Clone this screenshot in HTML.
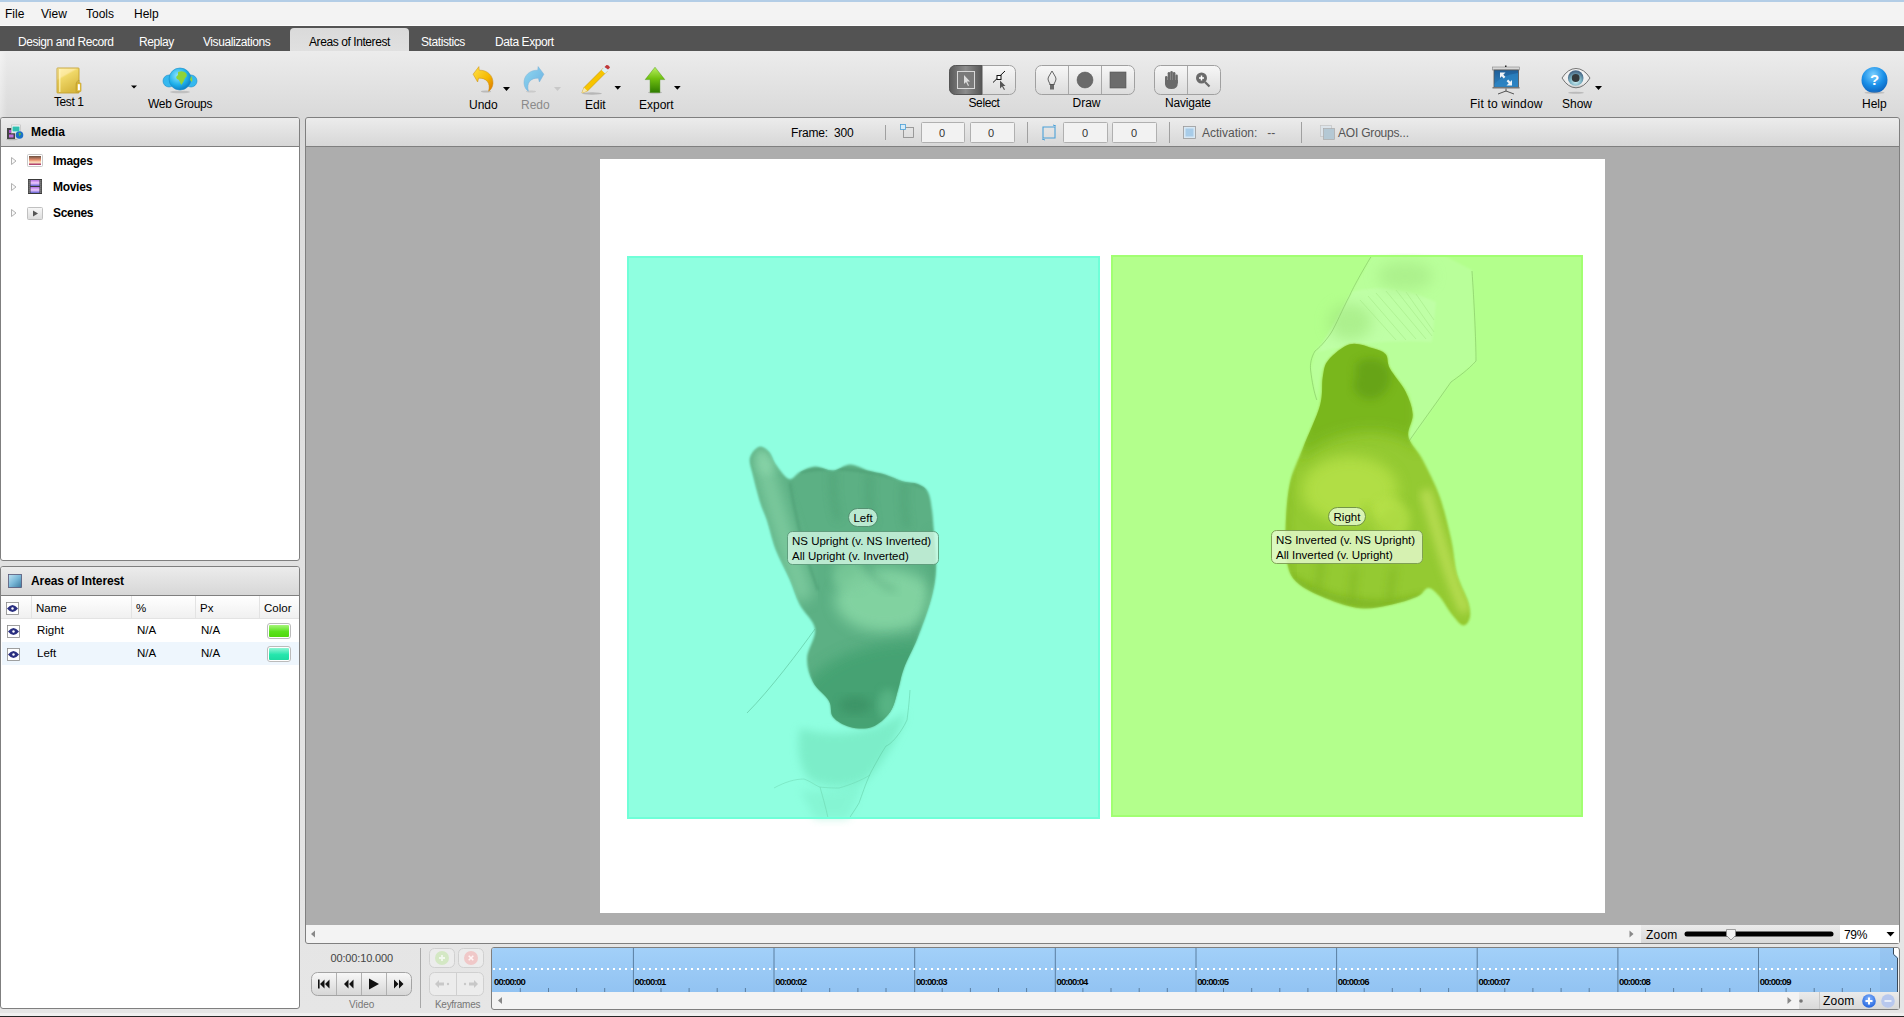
<!DOCTYPE html>
<html><head><meta charset="utf-8">
<style>
*{box-sizing:border-box}
html,body{margin:0;padding:0}
body{width:1904px;height:1017px;position:relative;overflow:hidden;background:#dedede;font-family:"Liberation Sans",sans-serif;font-size:12px;color:#000}
.a{position:absolute}
.t{position:absolute;white-space:nowrap;line-height:1}
svg{position:absolute;overflow:visible}
.hdr{background:linear-gradient(#ececec,#d7d7d7)}
.tb{color:#000}
</style></head><body>
<!-- top blue line -->
<div class="a" style="left:0;top:0;width:1904px;height:2px;background:#b3cde6"></div>
<!-- menu bar -->
<div class="a" style="left:0;top:2px;width:1904px;height:23px;background:#f3f3f3"></div>
<div class="a" style="left:0;top:25px;width:1904px;height:1px;background:#fbfbfb"></div>
<div class="t" style="left:5px;top:8px">File</div>
<div class="t" style="left:41px;top:8px">View</div>
<div class="t" style="left:86px;top:8px">Tools</div>
<div class="t" style="left:134px;top:8px">Help</div>
<!-- tab bar -->
<div class="a" style="left:0;top:26px;width:1904px;height:25px;background:#535353"></div>
<div class="a" style="left:290px;top:28px;width:119px;height:23px;background:linear-gradient(#dadada,#e0e0e0);border-radius:4px 4px 0 0"></div>
<div id="tabs" style="color:#fff;letter-spacing:-0.42px">
<div class="t" style="left:18px;top:36px">Design and Record</div>
<div class="t" style="left:139px;top:36px">Replay</div>
<div class="t" style="left:203px;top:36px">Visualizations</div>
<div class="t" style="left:309px;top:36px;color:#000">Areas of Interest</div>
<div class="t" style="left:421px;top:36px">Statistics</div>
<div class="t" style="left:495px;top:36px">Data Export</div>
</div>
<!-- toolbar background -->
<div class="a" style="left:0;top:51px;width:1904px;height:966px;background:linear-gradient(#ececec 0px,#d9d9d9 66px,#dcdcdc 120px,#e0e0e0 400px,#e6e6e6 966px)"></div>


<!-- TOOLBAR -->
<svg style="left:0;top:0" width="1904" height="120">
 <defs>
  <linearGradient id="fold" x1="0" y1="0" x2="1" y2="1"><stop offset="0" stop-color="#fbeea0"/><stop offset="0.5" stop-color="#f0d870"/><stop offset="1" stop-color="#d9b840"/></linearGradient>
  <radialGradient id="globe" cx="0.4" cy="0.35" r="0.7"><stop offset="0" stop-color="#8fe6ff"/><stop offset="0.6" stop-color="#1fb0ea"/><stop offset="1" stop-color="#0a78c0"/></radialGradient>
  <linearGradient id="undo" x1="0" y1="0" x2="1" y2="1"><stop offset="0" stop-color="#ffe24a"/><stop offset="0.6" stop-color="#f5b800"/><stop offset="1" stop-color="#d97000"/></linearGradient>
  <linearGradient id="redo" x1="0" y1="0" x2="1" y2="1"><stop offset="0" stop-color="#8fd8f0"/><stop offset="1" stop-color="#6aaee0"/></linearGradient>
  <linearGradient id="exp" x1="0" y1="0" x2="0" y2="1"><stop offset="0" stop-color="#b8f060"/><stop offset="0.45" stop-color="#70c010"/><stop offset="1" stop-color="#2f7c00"/></linearGradient>
  <linearGradient id="btn" x1="0" y1="0" x2="0" y2="1"><stop offset="0" stop-color="#f7f7f7"/><stop offset="1" stop-color="#dcdcdc"/></linearGradient>
  <linearGradient id="sel" x1="0" y1="0" x2="1" y2="0"><stop offset="0" stop-color="#5a5a5a"/><stop offset="0.5" stop-color="#8c8c8c"/><stop offset="1" stop-color="#555"/></linearGradient>
  <linearGradient id="fitscr" x1="0" y1="0" x2="0" y2="1"><stop offset="0" stop-color="#1f5e98"/><stop offset="1" stop-color="#2e82c0"/></linearGradient>
  <radialGradient id="iris" cx="0.5" cy="0.7" r="0.6"><stop offset="0" stop-color="#d8f6fa"/><stop offset="0.6" stop-color="#7ab0c0"/><stop offset="1" stop-color="#4a6a88"/></radialGradient>
  <radialGradient id="help" cx="0.45" cy="0.3" r="0.75"><stop offset="0" stop-color="#7cd0ff"/><stop offset="0.55" stop-color="#1a90e8"/><stop offset="1" stop-color="#0a5cb8"/></radialGradient>
 </defs>
 <!-- folder -->
 <linearGradient id="fold2" x1="0" y1="0" x2="0.5" y2="1"><stop offset="0" stop-color="#fff2b0"/><stop offset="0.35" stop-color="#fbe79a"/><stop offset="0.42" stop-color="#f0d868"/><stop offset="1" stop-color="#d8b840"/></linearGradient>
 <rect x="57" y="68" width="22" height="25" rx="0.6" fill="url(#fold2)" stroke="#c4a232" stroke-width="0.9"/>
 <path d="M59.8 69v23" stroke="#fff4b8" stroke-width="1.2" opacity="0.9"/>
 <path d="M58.6 69v23" stroke="#d4b040" stroke-width="0.6" opacity="0.8"/>
 <path d="M79 80 q-3 1.5 -3 4 v8.5 h3z" fill="#dcbc48" stroke="#b89a30" stroke-width="0.6"/>
 <rect x="76.5" y="83" width="4.5" height="8.5" rx="0.5" fill="#e4c040" stroke="#c09a20" stroke-width="0.6"/>
 <rect x="77.9" y="84.2" width="2" height="6" fill="#fff"/>
 <path d="M131 85.5h6l-3 3z" fill="#000"/>
 <!-- globe -->
 <ellipse cx="180" cy="92" rx="10" ry="1.3" fill="#aaa" opacity="0.6"/>
 <circle cx="169" cy="81" r="6" fill="#35b8ef" stroke="#1a8cc8" stroke-width="0.6"/>
 <circle cx="191" cy="81" r="6" fill="#35b8ef" stroke="#1a8cc8" stroke-width="0.6"/>
 <circle cx="180" cy="79" r="11" fill="url(#globe)" stroke="#1a8cc8" stroke-width="0.6"/>
 <path d="M178 72 q5 -2 8 1 q2 3 -1 5 q-1 3 -3 6 q-1 2 -2 -2 q-1 -3 -3 -3 q-2 -2 1 -4z" fill="#8fd33a"/>
 <path d="M191 76 q2 2 1 6 l-2 -2z" fill="#8fd33a"/>
 <!-- undo -->
 <ellipse cx="486" cy="91.5" rx="5" ry="1" fill="#aaa" opacity="0.7"/>
 <path d="M473.1 74.2 L478.9 66.6 L479.2 70.2 C487 69.8 493.5 75.5 493 83.5 C492.6 87.5 490.5 90.2 488.6 91.2 C489.6 87.2 489.4 83.8 487.2 81.2 C485 78.8 482 78 478.6 78.2 L477.6 82 Z" fill="url(#undo)" stroke="#c88a10" stroke-width="0.5"/>
 <path d="M503 87h7l-3.5 4z" fill="#000"/>
 <!-- redo -->
 <ellipse cx="531" cy="91.5" rx="5" ry="1" fill="#bbb" opacity="0.6"/>
 <path d="M543.9 74.2 L538.1 66.6 L537.8 70.2 C530 69.8 523.5 75.5 524 83.5 C524.4 87.5 526.5 90.2 528.4 91.2 C527.4 87.2 527.6 83.8 529.8 81.2 C532 78.8 535 78 538.4 78.2 L539.4 82 Z" fill="url(#redo)" stroke="#7ab0d8" stroke-width="0.5"/>
 <path d="M554 87h7l-3.5 4z" fill="#c8c8c8"/>
 <!-- pencil -->
 <ellipse cx="592" cy="93.5" rx="10" ry="1.2" fill="#999" opacity="0.6"/>
 <path d="M581.9 92.9 L584 87.5 L603.5 68 L607 71.5 L587.5 91 Z" fill="#f7c400" stroke="#b88a00" stroke-width="0.5"/>
 <path d="M581.9 92.9 L584 87.5 L587.5 91 Z" fill="#f5e6b0"/>
 <path d="M601.5 70 L605 66.5 L608.5 70 L605 73.5 Z" fill="#d8eef8"/>
 <path d="M604.5 67 L606.5 65 Q609 64.5 610 67.5 L608 69.5 Z" fill="#c03838"/>
 <path d="M614.5 86h6.5l-3.25 3.75z" fill="#000"/>
 <!-- export -->
 <ellipse cx="655" cy="92.5" rx="7" ry="1" fill="#999" opacity="0.6"/>
 <path d="M655 67.2 L664.8 79.6 L659.9 79.6 L659.9 92.6 L650.1 92.6 L650.1 79.6 L645.2 79.6 Z" fill="url(#exp)" stroke="#3a8a00" stroke-width="0.4"/>
 <path d="M674 86h6.7l-3.35 3.75z" fill="#000"/>

 <!-- select group -->
 <rect x="949.5" y="65.5" width="66" height="29" rx="6" fill="url(#btn)" stroke="#a0a0a0"/>
 <path d="M955.5 65.5 H982 V94.5 H955.5 A6 6 0 0 1 949.5 88.5 V71.5 A6 6 0 0 1 955.5 65.5Z" fill="url(#sel)" stroke="#555"/>
 <rect x="957.5" y="71.5" width="17" height="17" fill="#7a7a7a" stroke="#d8d8d8" stroke-width="1"/>
 <path d="M964 75 v9 l2 -2 l2 4 l1 -0.5 l-2 -4 h3z" fill="#ddd"/>
 <path d="M993 82.5 L1005 71" stroke="#111" stroke-width="1"/>
 <rect x="997" y="75.5" width="4" height="4" fill="#fff" stroke="#111" stroke-width="1"/>
 <path d="M1000 80.5 v8 l2 -2 l2 3.5 l1 -0.5 l-2 -3.5 h2.5z" fill="#555"/>
 <!-- draw group -->
 <rect x="1035.5" y="65.5" width="99" height="29" rx="6" fill="url(#btn)" stroke="#a0a0a0"/>
 <path d="M1068.5 66v28 M1101.5 66v28" stroke="#a8a8a8"/>
 <path d="M1052 71 l-3.5 6 q-1 2 0 4 l2 4 h3 l2 -4 q1 -2 0 -4z" fill="none" stroke="#555" stroke-width="0.9"/>
 <rect x="1050" y="85" width="4" height="4.5" fill="#6a6a6a"/>
 <path d="M1049.5 84.5h5" stroke="#555"/>
 <circle cx="1085" cy="80" r="8" fill="#6a6a6a" stroke="#555" stroke-width="0.5"/>
 <rect x="1110" y="72" width="16" height="16" fill="#6c6c6c" stroke="#555" stroke-width="0.6"/>
 <!-- navigate group -->
 <rect x="1154.5" y="65.5" width="66" height="29" rx="6" fill="url(#btn)" stroke="#a0a0a0"/>
 <path d="M1187.5 66v28" stroke="#a8a8a8"/>
 <g fill="#6a6a6a"><rect x="1165" y="76" width="2.6" height="9" rx="1.3"/><rect x="1167.7" y="72" width="2.5" height="11" rx="1.25"/><rect x="1170.3" y="71" width="2.5" height="12" rx="1.25"/><rect x="1172.9" y="72" width="2.5" height="11" rx="1.25"/><rect x="1175.4" y="74.5" width="2.4" height="9" rx="1.2"/><path d="M1165 80 h12.8 v3 q0 6 -6.4 6 q-6.4 0 -6.4 -6z"/></g>
 <circle cx="1201.5" cy="78" r="5.5" fill="#6a6a6a"/>
 <path d="M1199 78h5 M1201.5 75.5v5" stroke="#fff" stroke-width="1.5"/>
 <path d="M1205 82 l4.5 4.5" stroke="#6a6a6a" stroke-width="2.2"/>

 <!-- fit to window -->
 <rect x="1492.5" y="67" width="27" height="3" fill="#d8d8d8" stroke="#888" stroke-width="0.6"/>
 <rect x="1505" y="65.5" width="1.5" height="1.5" fill="#222"/>
 <rect x="1494" y="70" width="24.5" height="17" fill="url(#fitscr)" stroke="#555" stroke-width="0.8"/>
 <path d="M1494.5 84 q8 -9 23.5 -11 v14 h-23.5z" fill="#2c86c6" opacity="0.7"/>
 <rect x="1492.5" y="87" width="27" height="1.5" fill="#777"/>
 <path d="M1506 88.5 v3 M1506 91 l-8 3 M1506 91 l8 3" stroke="#555" stroke-width="1"/>
 <path d="M1500 72.5 h5.5 l-5.5 5.5z" fill="#f0f4f8"/><path d="M1502 75 l2.6 2.6" stroke="#f0f4f8" stroke-width="2.2"/>
 <path d="M1512 85.5 h-5.5 l5.5 -5.5z" fill="#f0f4f8"/><path d="M1510 83 l-2.6 -2.6" stroke="#f0f4f8" stroke-width="2.2"/>
 <!-- eye -->
 <ellipse cx="1576" cy="92.8" rx="7.8" ry="1" fill="#aaa" opacity="0.7"/>
 <radialGradient id="eyew" cx="0.5" cy="0.35" r="0.7"><stop offset="0" stop-color="#ffffff"/><stop offset="0.7" stop-color="#ececec"/><stop offset="1" stop-color="#b8b8b8"/></radialGradient><path d="M1562 78 Q1568 68.5 1576 68.5 Q1584 68.5 1590 78 Q1584 87.8 1576 87.8 Q1568 87.8 1562 78Z" fill="url(#eyew)" stroke="#666" stroke-width="0.9"/>
 <circle cx="1575.7" cy="78" r="7.8" fill="url(#iris)"/>
 <circle cx="1575.7" cy="78" r="3.9" fill="#34393c"/>
 <path d="M1595 86h7l-3.5 4z" fill="#000"/>
 <!-- help -->
 <circle cx="1874.5" cy="80" r="13" fill="url(#help)"/>
 <ellipse cx="1874.5" cy="92.8" rx="10" ry="1" fill="#999" opacity="0.5"/>
 <text x="1874.5" y="85" text-anchor="middle" font-family="Liberation Sans" font-weight="bold" font-size="15" fill="#fff">?</text>
</svg>
<div class="t" style="left:54px;top:96px;letter-spacing:-0.4px">Test 1</div>
<div class="t" style="left:148px;top:98px;letter-spacing:-0.3px">Web Groups</div>
<div class="t" style="left:469px;top:99px">Undo</div>
<div class="t" style="left:521px;top:99px;color:#8a8a8a">Redo</div>
<div class="t" style="left:585px;top:99px">Edit</div>
<div class="t" style="left:639px;top:99px">Export</div>
<div class="t" style="left:968.5px;top:97px;letter-spacing:-0.4px">Select</div>
<div class="t" style="left:1072.5px;top:97px">Draw</div>
<div class="t" style="left:1165px;top:97px;letter-spacing:-0.2px">Navigate</div>
<div class="t" style="left:1470px;top:98px;letter-spacing:0.2px">Fit to window</div>
<div class="t" style="left:1562px;top:98px">Show</div>
<div class="t" style="left:1862px;top:98px">Help</div>

<div class="a" style="left:0;top:52px;width:7px;height:65px;background:linear-gradient(to right,rgba(255,255,255,0.35),rgba(255,255,255,0))"></div>
<!-- LEFT: media panel -->
<div class="a" style="left:0;top:117px;width:300px;height:444px;border:1px solid #7f7f7f;border-radius:3px;background:#fff;overflow:hidden">
  <div class="a hdr" style="left:0;top:0;width:298px;height:29px;border-bottom:1px solid #7f7f7f"></div>
</div>
<div class="t" style="left:31px;top:126px;font-weight:bold">Media</div>
<div class="t" style="left:53px;top:155px;font-weight:bold;letter-spacing:-0.3px">Images</div>
<div class="t" style="left:53px;top:181px;font-weight:bold;letter-spacing:-0.3px">Movies</div>
<div class="t" style="left:53px;top:207px;font-weight:bold;letter-spacing:-0.3px">Scenes</div>

<!-- LEFT: AOI panel -->
<div class="a" style="left:0;top:566px;width:300px;height:443px;border:1px solid #7f7f7f;border-radius:3px;background:#fff;overflow:hidden">
  <div class="a hdr" style="left:0;top:0;width:298px;height:29px;border-bottom:1px solid #7f7f7f"></div>
  <div class="a" style="left:0;top:29px;width:298px;height:23px;background:linear-gradient(#ffffff,#f0f0f0);border-bottom:1px solid #e3e3e3"></div>
  <div class="a" style="left:30px;top:29px;width:1px;height:22px;background:#e3e3e3"></div>
  <div class="a" style="left:130px;top:29px;width:1px;height:22px;background:#e3e3e3"></div>
  <div class="a" style="left:194px;top:29px;width:1px;height:22px;background:#e3e3e3"></div>
  <div class="a" style="left:258px;top:29px;width:1px;height:22px;background:#e3e3e3"></div>
  <div class="a" style="left:1px;top:75px;width:297px;height:23px;background:#eef6fd"></div>
</div>
<div class="t" style="left:31px;top:575px;font-weight:bold;letter-spacing:-0.1px">Areas of Interest</div>
<div class="t" style="left:36px;top:603px;font-size:11.5px">Name</div>
<div class="t" style="left:136px;top:603px;font-size:11.5px">%</div>
<div class="t" style="left:200px;top:603px;font-size:11.5px">Px</div>
<div class="t" style="left:264px;top:603px;font-size:11.5px">Color</div>
<div class="t" style="left:37px;top:625px;font-size:11.5px">Right</div>
<div class="t" style="left:137px;top:625px;font-size:11.5px">N/A</div>
<div class="t" style="left:201px;top:625px;font-size:11.5px">N/A</div>
<div class="t" style="left:37px;top:648px;font-size:11.5px">Left</div>
<div class="t" style="left:137px;top:648px;font-size:11.5px">N/A</div>
<div class="t" style="left:201px;top:648px;font-size:11.5px">N/A</div>
<div class="a" style="left:267px;top:623px;width:24px;height:16px;border:1px solid #bbb;border-radius:3px;background:#fff;padding:1px">
  <div style="width:100%;height:100%;background:linear-gradient(#a6f57a,#5ae21d 55%,#4fd80d);border-radius:1px"></div></div>
<div class="a" style="left:267px;top:646px;width:24px;height:16px;border:1px solid #bbb;border-radius:3px;background:#fff;padding:1px">
  <div style="width:100%;height:100%;background:linear-gradient(#8ff5d6,#26e6ad 55%,#1ddba2);border-radius:1px"></div></div>


<svg style="left:0;top:110px" width="300" height="120">
 <defs>
  <linearGradient id="pic" x1="0" y1="0" x2="0" y2="1"><stop offset="0" stop-color="#6a5040"/><stop offset="0.45" stop-color="#e89070"/><stop offset="0.7" stop-color="#ffe8c0"/><stop offset="1" stop-color="#a02060"/></linearGradient>
  <linearGradient id="mov" x1="0" y1="0" x2="0" y2="1"><stop offset="0" stop-color="#b070e0"/><stop offset="0.5" stop-color="#f0c8ff"/><stop offset="1" stop-color="#6060d0"/></linearGradient>
  <linearGradient id="scn" x1="0" y1="0" x2="0" y2="1"><stop offset="0" stop-color="#f8f8f8"/><stop offset="1" stop-color="#dcdcdc"/></linearGradient>
  <linearGradient id="aoiic" x1="0" y1="0" x2="1" y2="1"><stop offset="0" stop-color="#b8dcef"/><stop offset="1" stop-color="#3a80a8"/></linearGradient>
 </defs>
 <!-- media header icon -->
 <rect x="7" y="18" width="8" height="11" fill="#444"/>
 <rect x="9" y="20" width="4.5" height="3" fill="#b050d0"/><rect x="9" y="24.5" width="4.5" height="3" fill="#c070e0"/>
 <rect x="11.5" y="15" width="9" height="8" fill="#fff" stroke="#bbb" stroke-width="0.7"/>
 <rect x="12.5" y="16.5" width="7" height="5" fill="#30c0b0"/>
 <circle cx="19.5" cy="25" r="3.8" fill="#1a70c8"/><path d="M18.5 23 q2 -1 2.5 1 l-1.5 2.5z" fill="#5ac040"/>
 <ellipse cx="12" cy="29.5" rx="6" ry="0.8" fill="#999" opacity="0.6"/>
 <!-- tree arrows -->
 <path d="M11.5 47.5 L16 51 L11.5 54.5 Z" fill="#fafafa" stroke="#a8a8a8" stroke-width="0.9"/>
 <path d="M11.5 73.5 L16 77 L11.5 80.5 Z" fill="#fafafa" stroke="#a8a8a8" stroke-width="0.9"/>
 <path d="M11.5 99.5 L16 103 L11.5 106.5 Z" fill="#fafafa" stroke="#a8a8a8" stroke-width="0.9"/>
 <!-- images -->
 <rect x="27.5" y="44.5" width="15" height="12" rx="1" fill="#fff" stroke="#c8c8c8"/>
 <rect x="29" y="46" width="12" height="9" fill="url(#pic)"/>
 <!-- movies -->
 <rect x="28" y="69" width="14" height="15" fill="#3a3a3a"/>
 <rect x="30.5" y="70" width="9" height="6" fill="url(#mov)"/><rect x="30.5" y="77" width="9" height="6" fill="url(#mov)"/>
 <path d="M29.2 70.5v12.5 M40.8 70.5v12.5" stroke="#fff" stroke-width="0.9" stroke-dasharray="0.9 1.1"/>
 <!-- scenes -->
 <rect x="27.5" y="97.5" width="15" height="12" rx="1" fill="url(#scn)" stroke="#c0c0c0"/>
 <path d="M33 100.5 L38 103.5 L33 106.5Z" fill="#555"/>
</svg>
<svg style="left:0;top:560px" width="300" height="110">
 <defs>
  <linearGradient id="aoiic2" x1="0" y1="0" x2="1" y2="1"><stop offset="0" stop-color="#c0e2f2"/><stop offset="0.5" stop-color="#7ab8d8"/><stop offset="1" stop-color="#3a7aa0"/></linearGradient>
 </defs>
 <rect x="8.5" y="14.5" width="13" height="13" fill="url(#aoiic2)" stroke="#557" stroke-width="0.8"/>
 <!-- eyes -->
 <g id="eye1">
 <rect x="6.5" y="42.5" width="12" height="12" fill="#fff" stroke="#888" stroke-width="0.8"/>
 <path d="M7 48.5 q5.5 -7 11 0 q-5.5 7 -11 0z" fill="#2a2f80"/><circle cx="12.5" cy="48.5" r="1.2" fill="#fff"/>
 </g>
 <rect x="7.5" y="65.5" width="12" height="12" fill="#fff" stroke="#888" stroke-width="0.8"/>
 <path d="M8 71.5 q5.5 -7 11 0 q-5.5 7 -11 0z" fill="#2a2f80"/><circle cx="13.5" cy="71.5" r="1.2" fill="#fff"/>
 <rect x="7.5" y="88.5" width="12" height="12" fill="#fff" stroke="#888" stroke-width="0.8"/>
 <path d="M8 94.5 q5.5 -7 11 0 q-5.5 7 -11 0z" fill="#2a2f80"/><circle cx="13.5" cy="94.5" r="1.2" fill="#fff"/>
</svg>

<!-- MAIN panel -->
<div class="a" style="left:305px;top:117px;width:1595px;height:827px;border:1px solid #7f7f7f;border-radius:3px;background:#adadad;overflow:hidden">
  <div class="a hdr" style="left:0;top:0;width:1593px;height:29px;border-bottom:1px solid #7f7f7f"></div>
  <div class="a" style="left:0;top:807px;width:1593px;height:18px;background:#f3f3f3"></div>
</div>
<div class="t" style="left:791px;top:127px;letter-spacing:-0.2px">Frame:&nbsp; 300</div>


<svg style="left:880px;top:117px" width="560" height="30">
 <path d="M5.5 8v15 M147.5 5v21 M289.5 5v21 M421.5 5v21" stroke="#a0a0a0"/>
 <rect x="23.5" y="10.5" width="10" height="10" fill="none" stroke="#888" stroke-width="0.8"/>
 <rect x="20.5" y="7.5" width="5" height="5" fill="#d8ecf8" stroke="#4aa0d8" stroke-width="0.8"/>
 <rect x="41.5" y="5.5" width="43" height="20" rx="1" fill="#f2f2f2" stroke="#b0b0b0"/>
 <rect x="90.5" y="5.5" width="44" height="20" rx="1" fill="#f2f2f2" stroke="#b0b0b0"/>
 <path d="M163 10h12v11h-12z" fill="none" stroke="#4aa0d8" stroke-width="1.1"/>
 <path d="M176 9l-3 -1 M162 22 l3 1" stroke="#4aa0d8" stroke-width="1"/>
 <rect x="183.5" y="5.5" width="44" height="20" rx="1" fill="#f2f2f2" stroke="#b0b0b0"/>
 <rect x="232.5" y="5.5" width="44" height="20" rx="1" fill="#f2f2f2" stroke="#b0b0b0"/>
 <rect x="303.5" y="9.5" width="12" height="12" fill="#d8e8f4" stroke="#999" stroke-width="0.8"/>
 <rect x="305.5" y="11.5" width="8" height="8" fill="#a8cce8"/>
 <rect x="440.5" y="8.5" width="11" height="11" fill="#dde4ea" stroke="#c4c4c4" stroke-width="0.7"/>
 <rect x="443.5" y="11.5" width="11" height="11" fill="#b4c8d4" stroke="#aaa" stroke-width="0.7"/>
</svg>
<div class="t" style="left:939px;top:128px;font-size:11px;color:#333">0</div>
<div class="t" style="left:988px;top:128px;font-size:11px;color:#333">0</div>
<div class="t" style="left:1082px;top:128px;font-size:11px;color:#333">0</div>
<div class="t" style="left:1131px;top:128px;font-size:11px;color:#333">0</div>
<div class="t" style="left:1202px;top:127px;color:#555">Activation:&nbsp;&nbsp; --</div>
<div class="t" style="left:1338px;top:127px;color:#555;letter-spacing:-0.2px">AOI Groups...</div>

<!-- stimulus -->
<div class="a" style="left:600px;top:159px;width:1005px;height:754px;background:#fff"></div>


<svg style="left:0;top:0" width="1904" height="1017">
 <defs>
  <filter id="bl1" x="-10%" y="-10%" width="120%" height="120%"><feGaussianBlur stdDeviation="1.2"/></filter>
  <filter id="bl3" x="-20%" y="-20%" width="140%" height="140%"><feGaussianBlur stdDeviation="4"/></filter>
  <filter id="bl6" x="-30%" y="-30%" width="160%" height="160%"><feGaussianBlur stdDeviation="7"/></filter>
  <clipPath id="clipL"><path id="handL" d="M759.0,447.0 C762.2,446.0 766.2,449.0 769.0,452.0 C771.8,455.0 772.7,460.5 776.0,465.0 C779.3,469.5 785.0,477.8 789.0,479.0 C793.0,480.2 795.7,474.1 800.0,472.0 C804.3,469.9 809.5,466.8 815.0,466.5 C820.5,466.2 827.2,470.8 833.0,470.5 C838.8,470.2 844.2,464.5 850.0,464.5 C855.8,464.5 862.2,468.8 868.0,470.5 C873.8,472.2 879.2,472.7 885.0,474.5 C890.8,476.3 897.5,479.9 903.0,481.5 C908.5,483.1 913.8,482.2 918.0,484.0 C922.2,485.8 925.7,487.7 928.0,492.0 C930.3,496.3 931.0,503.0 932.0,510.0 C933.0,517.0 933.3,524.1 934.0,534.0 C934.7,543.9 936.5,558.7 936.0,569.5 C935.5,580.3 934.1,587.6 931.0,599.0 C927.9,610.4 922.0,626.5 917.5,638.0 C913.0,649.5 907.2,659.3 904.0,668.0 C900.8,676.7 900.3,682.7 898.0,690.0 C895.7,697.3 894.3,705.8 890.0,712.0 C885.7,718.2 878.7,724.5 872.0,727.0 C865.3,729.5 856.5,728.7 850.0,727.0 C843.5,725.3 836.5,721.3 833.0,717.0 C829.5,712.7 832.3,706.8 829.0,701.0 C825.7,695.2 816.7,689.2 813.0,682.0 C809.3,674.8 806.7,666.8 807.0,658.0 C807.3,649.2 816.2,637.8 815.0,629.0 C813.8,620.2 804.2,613.3 800.0,605.0 C795.8,596.7 793.7,588.2 789.7,579.0 C785.7,569.8 779.8,559.8 776.0,550.0 C772.2,540.2 769.6,527.8 767.0,520.0 C764.4,512.2 762.8,510.5 760.5,503.0 C758.2,495.5 754.8,482.5 753.0,475.0 C751.2,467.5 749.0,462.7 750.0,458.0 C751.0,453.3 755.8,448.0 759.0,447.0 Z"/></clipPath>
  <clipPath id="clipR"><path id="handR" d="M1349.9,344.3 C1357.2,342.3 1366.0,346.3 1372.0,348.0 C1378.0,349.7 1382.6,350.9 1385.6,354.3 C1388.6,357.7 1386.5,362.3 1389.8,368.5 C1393.1,374.7 1401.7,383.8 1405.5,391.4 C1409.3,399.0 1412.2,406.6 1412.7,414.2 C1413.2,421.8 1406.7,429.4 1408.4,437.0 C1410.1,444.6 1417.5,449.8 1422.7,459.8 C1427.9,469.8 1435.0,483.6 1439.8,496.9 C1444.5,510.2 1448.3,526.9 1451.2,539.7 C1454.1,552.6 1454.1,563.5 1456.9,574.0 C1459.8,584.5 1466.2,595.1 1468.3,602.5 C1470.4,609.9 1470.7,614.4 1469.7,618.2 C1468.8,622.0 1465.9,626.3 1462.6,625.3 C1459.3,624.3 1453.8,616.8 1450.0,612.0 C1446.2,607.2 1443.4,600.8 1439.8,596.8 C1436.2,592.8 1432.2,588.0 1428.4,588.0 C1424.6,588.0 1423.7,593.9 1417.0,596.8 C1410.3,599.7 1397.9,603.4 1388.4,605.3 C1378.9,607.2 1370.4,609.4 1359.9,608.2 C1349.4,607.0 1336.1,602.5 1325.6,598.2 C1315.1,593.9 1303.5,588.5 1297.1,582.5 C1290.7,576.5 1289.0,572.0 1287.1,562.5 C1285.2,553.0 1285.2,538.7 1285.7,525.4 C1286.2,512.1 1287.2,495.5 1290.0,482.7 C1292.8,469.9 1297.8,461.2 1302.8,448.4 C1307.8,435.5 1316.7,417.5 1320.0,405.6 C1323.3,393.7 1321.4,384.6 1322.8,377.0 C1324.2,369.4 1324.0,365.4 1328.5,360.0 C1333.0,354.6 1342.7,346.3 1349.9,344.3 Z"/></clipPath>
 </defs>
 <!-- LEFT AOI -->
 <rect x="627" y="256" width="473" height="563" fill="#8fffe0"/>
 <!-- left sleeve -->
 <path d="M800,728 C830,738 870,735 906,712 C900,735 885,760 868,778 C850,790 825,788 810,780 C800,770 796,750 800,728Z" fill="#70e2ba" filter="url(#bl3)" opacity="0.6"/>
 <path d="M800,790 C820,792 845,790 865,780 C858,800 852,810 848,819 L815,819Z" fill="#78e8c2" filter="url(#bl3)" opacity="0.4"/>
 <path d="M815,629 C800,650 770,690 747,713" stroke="#5cc09a" stroke-width="0.9" fill="none" opacity="0.7"/>
 <path d="M910,690 C909,705 908,712 907,720 C900,735 890,745 886,746 C880,755 875,765 871,772 C865,785 862,795 859,803 C855,810 851,815 849,819" stroke="#5cc09a" stroke-width="1" fill="none" opacity="0.45"/>
 <path d="M774,788 C785,782 795,779 804,779 C812,782 816,786 820,787 C828,788 835,788 839,788 C850,785 862,780 870,775" stroke="#6ad0aa" stroke-width="1" fill="none" opacity="0.45"/>
 <path d="M820,787 C823,798 826,808 828,818" stroke="#6ad0aa" stroke-width="1" fill="none" opacity="0.5"/>
 <g filter="url(#bl1)">
  <use href="#handL" fill="#5cb084"/>
 </g>
 <g clip-path="url(#clipL)">
  <path d="M762,458 C770,490 785,540 805,600" stroke="#7fcca0" stroke-width="20" fill="none" filter="url(#bl6)" opacity="0.9"/>
  <ellipse cx="764" cy="462" rx="8" ry="14" fill="#8ad6aa" filter="url(#bl3)" opacity="0.8" transform="rotate(-20 764 462)"/>
  <path d="M790,483 C796,520 805,555 818,590" stroke="#4c9c72" stroke-width="3" fill="none" filter="url(#bl1)" opacity="0.5"/>
  <ellipse cx="885" cy="600" rx="50" ry="32" fill="#86d6a4" filter="url(#bl6)" opacity="0.9"/>
  <ellipse cx="850" cy="575" rx="18" ry="16" fill="#7ecd9c" filter="url(#bl3)" opacity="0.7"/>
  <path d="M833,470 C832,490 834,505 838,520 M870,474 C868,492 869,508 873,525 M905,481 C903,497 904,512 907,528" stroke="#4a9c70" stroke-width="4" fill="none" filter="url(#bl3)" opacity="0.8"/>
  <path d="M800,472 C830,466 880,468 930,490" stroke="#4a9a70" stroke-width="3" fill="none" filter="url(#bl1)" opacity="0.5"/>
  <path d="M862,555 C868,575 880,585 895,590" stroke="#509e76" stroke-width="4" fill="none" filter="url(#bl3)" opacity="0.6"/>
  <path d="M800,690 C830,650 880,640 930,640 L930,740 L800,740Z" fill="#44a272" filter="url(#bl6)" opacity="0.95"/>
  <ellipse cx="855" cy="705" rx="16" ry="9" fill="#3a9064" filter="url(#bl3)" opacity="0.7"/>
  <ellipse cx="888" cy="705" rx="10" ry="16" fill="#5cb888" filter="url(#bl3)" opacity="0.8"/>
  <path d="M932,530 C936,570 930,610 915,645" stroke="#52a87a" stroke-width="7" fill="none" filter="url(#bl3)" opacity="0.6"/>
 </g>
 <rect x="628" y="257" width="471" height="561" fill="none" stroke="#70ffd8" stroke-width="2"/>

 <!-- RIGHT AOI -->
 <rect x="1111" y="255" width="472" height="562" fill="#b3ff8c"/>
 <path d="M1372,256 L1445,256 L1472,270 L1476,362 L1451,382 L1406,446 L1414,419 L1410,394 L1389,366 L1387,353 L1350,345 L1321,370 L1317,400 L1311,370 L1315,351 L1331,333 L1350,295 Z" fill="#bfffa6" filter="url(#bl1)" opacity="0.55"/>
 <path d="M1352,292 C1380,284 1410,290 1436,302 L1432,342 C1400,340 1360,342 1318,352 C1325,340 1335,320 1352,292Z" fill="#c4ffae" filter="url(#bl1)" opacity="0.6"/>
 <ellipse cx="1350" cy="322" rx="22" ry="18" fill="#a0e67e" filter="url(#bl6)" opacity="0.6"/>
 <ellipse cx="1405" cy="276" rx="28" ry="14" fill="#a4e884" filter="url(#bl6)" opacity="0.6"/>
 <path d="M1360,300 l36,40 M1368,296 l38,44 M1376,293 l40,46 M1386,291 l40,48 M1396,290 l36,46 M1406,292 l28,40 M1416,294 l18,26" stroke="#a4e886" stroke-width="0.8" opacity="0.7"/>
 <path d="M1372,255 C1360,275 1352,290 1350,295 C1342,310 1336,325 1331,333 C1325,342 1319,348 1315,351 C1311,358 1310,364 1310.6,370 C1312,382 1314,392 1316.8,400" stroke="#84c464" stroke-width="0.9" fill="none" opacity="0.7"/>
 <path d="M1472,271 C1474,300 1476,340 1476,361 C1468,370 1458,377 1451,382 C1435,405 1420,425 1405.6,446" stroke="#84c464" stroke-width="0.9" fill="none" opacity="0.7"/>
 <g filter="url(#bl1)"><use href="#handR" fill="#94ca30"/></g>
 <g clip-path="url(#clipR)">
  <path d="M1300,460 C1330,430 1390,420 1420,450 L1420,330 L1300,330Z" fill="#78b61a" filter="url(#bl6)" opacity="0.95"/>
  <path d="M1356,364 C1368,354 1386,358 1390,372 C1392,386 1384,400 1368,399 C1356,397 1350,386 1356,378Z" fill="#609c12" filter="url(#bl3)" opacity="0.7"/>
  <ellipse cx="1350" cy="490" rx="48" ry="34" fill="#b4e046" filter="url(#bl6)" opacity="0.9"/>
  <ellipse cx="1390" cy="520" rx="20" ry="22" fill="#b8e24c" filter="url(#bl3)" opacity="0.7"/>
  <path d="M1365,505 C1370,525 1380,535 1395,540" stroke="#88bc28" stroke-width="4" fill="none" filter="url(#bl3)" opacity="0.6"/>
  <path d="M1425,490 C1440,540 1450,580 1466,612" stroke="#bee058" stroke-width="12" fill="none" filter="url(#bl3)" opacity="0.8"/>
  <path d="M1290,578 C1330,604 1380,612 1425,598" stroke="#68a212" stroke-width="5" fill="none" filter="url(#bl3)" opacity="0.8"/>
  <path d="M1318,590 C1320,572 1322,562 1322,552 M1352,604 C1352,588 1354,578 1355,568 M1390,602 C1390,588 1392,578 1394,568" stroke="#7ab020" stroke-width="4" fill="none" filter="url(#bl3)" opacity="0.8"/>
  <path d="M1287,470 C1284,520 1286,560 1295,580" stroke="#80b822" stroke-width="6" fill="none" filter="url(#bl3)" opacity="0.7"/>
 </g>
 <rect x="1112" y="256" width="470" height="560" fill="none" stroke="#a2ff72" stroke-width="2"/>

 <!-- labels -->
 <g font-family="Liberation Sans" font-size="11.5">
  <rect x="848.5" y="508.5" width="29" height="18" rx="9" fill="#d2f7e3" fill-opacity="0.8" stroke="#4f8a6c" stroke-width="0.9"/>
  <text x="863" y="521.7" text-anchor="middle" fill="#000">Left</text>
  <rect x="787.5" y="531.5" width="151" height="33" rx="5" fill="#d2f7e3" fill-opacity="0.8" stroke="#5a9878" stroke-width="0.9"/>
  <text x="792" y="544.6" fill="#000">NS Upright (v. NS Inverted)</text>
  <text x="792" y="559.6" fill="#000">All Upright (v. Inverted)</text>

  <rect x="1328.5" y="507.5" width="37" height="18" rx="9" fill="#e2f8c8" fill-opacity="0.85" stroke="#6a8a40" stroke-width="0.9"/>
  <text x="1347" y="520.7" text-anchor="middle" fill="#000">Right</text>
  <rect x="1271.5" y="530.5" width="151" height="33" rx="5" fill="#e2f8c8" fill-opacity="0.85" stroke="#7a9a50" stroke-width="0.9"/>
  <text x="1276" y="543.7" fill="#000">NS Inverted (v. NS Upright)</text>
  <text x="1276" y="558.7" fill="#000">All Inverted (v. Upright)</text>
 </g>
</svg>

<!-- TIMELINE -->
<div class="a" style="left:491px;top:947px;width:1409px;height:63px;border:1px solid #7f7f7f;border-radius:3px;background:#f3f3f3;overflow:hidden">
  <div class="a" style="left:0;top:0;width:1406px;height:44px;background:linear-gradient(#a2d0f9,#92c3f2)"></div>
</div>


<!-- scrollbar + zoom -->
<svg style="left:0;top:900px" width="1904" height="117">
 <defs>
  <linearGradient id="zbox" x1="0" y1="0" x2="0" y2="1"><stop offset="0" stop-color="#ebebeb"/><stop offset="1" stop-color="#d9d9d9"/></linearGradient>
  <linearGradient id="tbtn" x1="0" y1="0" x2="0" y2="1"><stop offset="0" stop-color="#f8f8f8"/><stop offset="1" stop-color="#d6d6d6"/></linearGradient>
  <radialGradient id="zplus" cx="0.5" cy="0.35" r="0.6"><stop offset="0" stop-color="#8ab8ff"/><stop offset="1" stop-color="#2a6ae0"/></radialGradient>
 </defs>
 <path d="M315 30.5 l-4 3.5 l4 3.5z" fill="#888"/>
 <path d="M1629.5 30.5 l4 3.5 l-4 3.5z" fill="#888"/>
 <rect x="1641" y="25" width="199" height="18" fill="url(#zbox)"/>
 <rect x="1840" y="25" width="59" height="18" fill="#fff"/>
 <path d="M1687 34h144" stroke="#000" stroke-width="5" stroke-linecap="round"/>
 <path d="M1726.5 29.5 h9 v6 l-4.5 4.5 l-4.5 -4.5z" fill="#f2f2f2" stroke="#888" stroke-width="0.8"/>
 <path d="M1886.5 32 h8 l-4 4.5z" fill="#000"/>
 <!-- transport -->
 <rect x="311.5" y="72.5" width="100" height="23" rx="6" fill="url(#tbtn)" stroke="#a4a4a4"/>
 <path d="M336.5 73v22 M361.5 73v22 M386.5 73v22" stroke="#b0b0b0"/>
 <path d="M318 79.5h1.6v9h-1.6z M320 84 l4.5 -4.5 v9z M325 84 l4.5 -4.5 v9z" fill="#111"/>
 <path d="M344 84 l4.5 -4.5 v9z M349 84 l4.5 -4.5 v9z" fill="#111"/>
 <path d="M369 78.5 l10 5.5 l-10 5.5z" fill="#111"/>
 <path d="M394 79.5 l4.5 4.5 l-4.5 4.5z M399 79.5 l4.5 4.5 l-4.5 4.5z" fill="#111"/>
 <path d="M420.5 48v60" stroke="#a8a8a8"/>
 <rect x="429.5" y="48.5" width="25" height="19" rx="5" fill="#ececec" stroke="#d0d0d0"/>
 <rect x="458.5" y="48.5" width="25" height="19" rx="5" fill="#ececec" stroke="#d0d0d0"/>
 <circle cx="442" cy="58" r="7" fill="#d4e8c4"/><path d="M439 58h6 M442 55v6" stroke="#f2f8ee" stroke-width="1.8"/>
 <circle cx="471" cy="58" r="7" fill="#f0c8c8"/><path d="M468.7 55.7l4.6 4.6 M473.3 55.7l-4.6 4.6" stroke="#fff4f4" stroke-width="1.6"/>
 <rect x="429.5" y="72.5" width="54" height="23" rx="5" fill="#ececec" stroke="#d0d0d0"/>
 <path d="M456.5 73v22" stroke="#d0d0d0"/>
 <path d="M435 84 l4 -4 v2.5 h5 v3 h-5 v2.5z" fill="#c8c8c8"/><circle cx="448" cy="84" r="1.2" fill="#c8c8c8"/>
 <path d="M478 84 l-4 -4 v2.5 h-5 v3 h5 v2.5z" fill="#c8c8c8"/><circle cx="465" cy="84" r="1.2" fill="#c8c8c8"/>
 <!-- timeline extras -->
 
 <rect x="1880" y="48" width="17" height="44" fill="#6a9ad0" opacity="0.18"/><path d="M1893.5 48 v6.3 l4 3.7 v34" stroke="#3a4a5a" stroke-width="1" fill="none"/><path d="M1894 48 h4 v9.5 l-4 -3.5z" fill="#fff"/>
 <path d="M1838 48 h58 v44 h-58z" fill="url(#tlshade)" opacity="0"/>
 <path d="M502 97 l-4 3.5 l4 3.5z" fill="#888"/>
 <path d="M1787.5 97 l4 3.5 l-4 3.5z" fill="#888"/>
 <rect x="1799" y="92" width="100" height="17" fill="url(#zbox)"/>
 <path d="M1819.5 92v17" stroke="#c8c8c8"/>
 <circle cx="1801" cy="101" r="1.8" fill="#777"/>
 <circle cx="1869" cy="101" r="6.8" fill="url(#zplus)"/>
 <path d="M1865.5 101h7 M1869 97.5v7" stroke="#fff" stroke-width="2"/>
 <circle cx="1888" cy="101" r="6.8" fill="#b8c8ee"/>
 <path d="M1884.5 101h7" stroke="#e8eefa" stroke-width="2"/>
</svg>
<div class="t" style="left:1646px;top:929px;letter-spacing:0.2px">Zoom</div>
<div class="t" style="left:1844px;top:929px;letter-spacing:-0.3px">79%</div>
<div class="t" style="left:1823px;top:995px;letter-spacing:0.2px">Zoom</div>
<div class="t" style="left:330.5px;top:953px;font-size:11px;color:#444;letter-spacing:-0.15px">00:00:10.000</div>
<div class="t" style="left:349px;top:1000px;font-size:10px;color:#777">Video</div>
<div class="t" style="left:435px;top:1000px;font-size:10px;color:#777;letter-spacing:-0.3px">Keyframes</div>
<svg style="left:0;top:0" width="1904" height="1017">
 <path d="M633.4 948v44 M774.0 948v44 M914.7 948v44 M1055.3 948v44 M1196.0 948v44 M1336.6 948v44 M1477.2 948v44 M1617.9 948v44 M1758.5 948v44 M520.3 988v4 M548.5 988v4 M576.6 988v4 M604.7 988v4 M661.0 988v4 M689.1 988v4 M717.2 988v4 M745.4 988v4 M801.6 988v4 M829.7 988v4 M857.9 988v4 M886.0 988v4 M942.2 988v4 M970.4 988v4 M998.5 988v4 M1026.6 988v4 M1082.9 988v4 M1111.0 988v4 M1139.2 988v4 M1167.3 988v4 M1223.5 988v4 M1251.7 988v4 M1279.8 988v4 M1307.9 988v4 M1364.2 988v4 M1392.3 988v4 M1420.4 988v4 M1448.6 988v4 M1504.8 988v4 M1532.9 988v4 M1561.1 988v4 M1589.2 988v4 M1645.5 988v4 M1673.6 988v4 M1701.7 988v4 M1729.8 988v4 M1786.1 988v4 M1814.2 988v4 M1842.3 988v4 M1870.5 988v4" stroke="#5a7ea0" stroke-width="1"/>
 <path d="M493 969 H1896" stroke="#fff" stroke-width="2" stroke-dasharray="2 4"/>
 <g font-family="Liberation Sans" font-size="9.5" font-weight="bold" letter-spacing="-0.9" fill="#000"><text x="494.0" y="985">00:00:00</text><text x="634.6" y="985">00:00:01</text><text x="775.3" y="985">00:00:02</text><text x="915.9" y="985">00:00:03</text><text x="1056.6" y="985">00:00:04</text><text x="1197.2" y="985">00:00:05</text><text x="1337.8" y="985">00:00:06</text><text x="1478.5" y="985">00:00:07</text><text x="1619.1" y="985">00:00:08</text><text x="1759.8" y="985">00:00:09</text></g>
</svg>

<div class="a" style="left:0;top:1013px;width:1904px;height:3px;background:#f0f0f0"></div>
<div class="a" style="left:0;top:1015.5px;width:1904px;height:1.5px;background:#262626"></div>
</body></html>
